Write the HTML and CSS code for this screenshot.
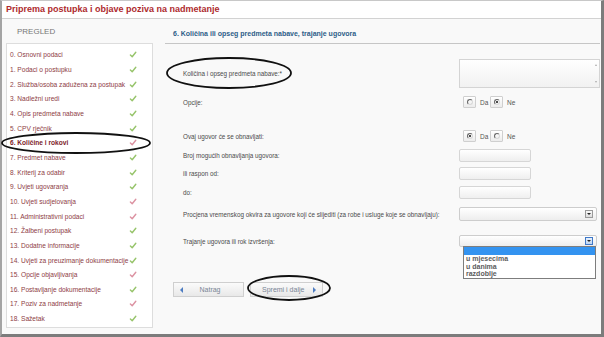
FILE: index.html
```html
<html lang="hr">
    <head>
        <meta charset="UTF-8">
        <meta name="viewport" content="width=device-width, initial-scale=1.0">
        <title>Priprema postupka</title>
        <link rel="stylesheet" href="styles.css">
    </head>
    <body>
        <svg class="defs" width="0" height="0">
            <symbol id="chk" viewBox="0 0 8 7">
                <path d="M1.4 4 L3.2 5.8 L6.8 1.2" fill="none" stroke="currentColor" stroke-width="1.4" stroke-linecap="round" stroke-linejoin="round"/>
            </symbol>
        </svg>
        <div class="frame">
            <div class="title">Priprema postupka i objave poziva na nadmetanje</div>
            <div class="layout">
                <aside class="sidebar">
                    <div class="side-head">PREGLED</div>
                    <ul class="steps">
                        <li><span>0. Osnovni podaci</span><svg class="check ok"><use href="#chk"/></svg></li>
                        <li><span>1. Podaci o postupku</span><svg class="check ok"><use href="#chk"/></svg></li>
                        <li><span>2. Služba/osoba zadužena za postupak</span><svg class="check ok"><use href="#chk"/></svg></li>
                        <li><span>3. Nadležni uredi</span><svg class="check ok"><use href="#chk"/></svg></li>
                        <li><span>4. Opis predmeta nabave</span><svg class="check ok"><use href="#chk"/></svg></li>
                        <li><span>5. CPV rječnik</span><svg class="check ok"><use href="#chk"/></svg></li>
                        <li class="current"><span>6. Količine i rokovi</span><svg class="check warn"><use href="#chk"/></svg></li>
                        <li><span>7. Predmet nabave</span><svg class="check ok"><use href="#chk"/></svg></li>
                        <li><span>8. Kriterij za odabir</span><svg class="check ok"><use href="#chk"/></svg></li>
                        <li><span>9. Uvjeti ugovaranja</span><svg class="check ok"><use href="#chk"/></svg></li>
                        <li><span>10. Uvjeti sudjelovanja</span><svg class="check warn"><use href="#chk"/></svg></li>
                        <li><span>11. Administrativni podaci</span><svg class="check warn"><use href="#chk"/></svg></li>
                        <li><span>12. Žalbeni postupak</span><svg class="check ok"><use href="#chk"/></svg></li>
                        <li><span>13. Dodatne informacije</span><svg class="check ok"><use href="#chk"/></svg></li>
                        <li><span>14. Uvjeti za preuzimanje dokumentacije</span><svg class="check ok"><use href="#chk"/></svg></li>
                        <li><span>15. Opcije objavljivanja</span><svg class="check warn"><use href="#chk"/></svg></li>
                        <li><span>16. Postavljanje dokumentacije</span><svg class="check ok"><use href="#chk"/></svg></li>
                        <li><span>17. Poziv za nadmetanje</span><svg class="check warn"><use href="#chk"/></svg></li>
                        <li><span>18. Sažetak</span><svg class="check ok"><use href="#chk"/></svg></li>
                    </ul>
                </aside>

                <section class="panel">
                    <h2 class="panel-title">6. Količina ili opseg predmeta nabave, trajanje ugovora</h2>

                    <div class="row r1">
                        <label>Količina i opseg predmeta nabave:*</label>
                        <div class="textarea"><span class="sc up"></span><span class="sc down"></span></div>
                    </div>
                    <div class="row r2">
                        <label>Opcije:</label>
                        <div class="radios">
                            <span class="rbox"><span class="rdot"></span></span><span class="rlabel">Da</span>
                            <span class="rbox"><span class="rdot on"></span></span><span class="rlabel">Ne</span>
                        </div>
                    </div>
                    <div class="row r3">
                        <label>Ovaj ugovor će se obnavljati:</label>
                        <div class="radios">
                            <span class="rbox"><span class="rdot on"></span></span><span class="rlabel">Da</span>
                            <span class="rbox"><span class="rdot"></span></span><span class="rlabel">Ne</span>
                        </div>
                    </div>
                    <div class="row r4">
                        <label>Broj mogućih obnavljanja ugovora:</label>
                        <div class="input"></div>
                    </div>
                    <div class="row r5">
                        <label>ili raspon od:</label>
                        <div class="input"></div>
                    </div>
                    <div class="row r6">
                        <label>do:</label>
                        <div class="input"></div>
                    </div>
                    <div class="row r7">
                        <label>Procjena vremenskog okvira za ugovore koji će slijediti (za robe i usluge koje se obnavljaju):</label>
                        <div class="select"><span class="arrow"></span></div>
                    </div>
                    <div class="row r8">
                        <label>Trajanje ugovora ili rok izvršenja:</label>
                        <div class="select open">
                            <span class="arrow"></span>
                            <ul class="options">
                                <li class="selected"></li>
                                <li>u mjesecima</li>
                                <li>u danima</li>
                                <li>razdoblje</li>
                            </ul>
                        </div>
                    </div>

                    <div class="actions">
                        <button type="button" class="btn back"><span class="tri left"></span><span class="btn-text">Natrag</span></button>
                        <button type="button" class="btn next"><span class="btn-text">Spremi i dalje</span><span class="tri right"></span></button>
                    </div>
                </section>
            </div>

            <svg class="marks" viewBox="0 0 604 337">
                <ellipse cx="229" cy="73" rx="62" ry="15"/>
                <ellipse cx="76" cy="143" rx="74" ry="10"/>
                <ellipse cx="289" cy="288" rx="41" ry="12"/>
            </svg>
        </div>
    </body>
</html>
```

FILE: styles.css
```css
* {
    margin: 0;
    padding: 0;
    box-sizing: border-box;
}

body {
    width: 604px;
    height: 337px;
    overflow: hidden;
    background-color: #fff;
    font-family: "Liberation Sans", Arial, sans-serif;
}

.defs {
    position: absolute;
}

.frame {
    position: relative;
    width: 604px;
    height: 337px;
    background-color: #f9f9f9;
    border-left: 2px solid #a4a4a4;
    border-top: 1px solid #c8c8c8;
    border-right: 3px solid #7c7c7c;
    border-bottom: 3px solid #7c7c7c;
}

.title {
    height: 18px;
    padding-left: 4px;
    line-height: 17px;
    font-size: 9px;
    font-weight: bold;
    color: #ae2a2e;
    background-color: #fff;
    border-bottom: 1px solid #d2d2d2;
}

.layout {
    display: flex;
}

/* sidebar */
.sidebar {
    width: 147px;
    margin-left: 4px;
}

.side-head {
    height: 24px;
    line-height: 25px;
    padding-left: 11px;
    font-size: 8px;
    color: #777;
}

.steps {
    list-style: none;
    height: 285px;
    padding-top: 3.5px;
    background-color: #fff;
    border: 1px solid #ddd;

    li {
        height: 14.67px;
        display: flex;
        align-items: center;
        justify-content: space-between;
        padding: 0 15px 0 3px;
        font-size: 6.6px;
        color: #8e3d45;
        white-space: nowrap;
    }

    li.current {
        font-weight: bold;
        color: #7d2229;
    }
}

.check {
    width: 8px;
    height: 7px;
    flex-shrink: 0;
}

.check.ok {
    color: #97c46b;
}

.check.warn {
    color: #dc93a2;
}

/* main panel */
.panel {
    flex: 1;
    margin-left: 12px;
    margin-right: 1px;
}

.panel-title {
    height: 25px;
    padding: 9px 0 0 8px;
    line-height: 12px;
    font-size: 7px;
    font-weight: bold;
    color: #2e5d88;
    border-bottom: 1px solid #c6c6c6;
}

.row {
    display: flex;
    align-items: center;
    padding-left: 18px;

    label {
        width: 276px;
        flex-shrink: 0;
        font-size: 6.3px;
        color: #4a4a4a;
        white-space: nowrap;
    }
}

.r1 { margin-top: 15px; height: 29px; }
.r2 { margin-top: 8px; height: 12px; }
.r3 { margin-top: 22px; height: 12px; }
.r4 { margin-top: 7px; height: 13px; }
.r5 { margin-top: 5px; height: 13px; }
.r6 { margin-top: 6px; height: 13px; }
.r7 { margin-top: 8px; height: 14px; }
.r8 { margin-top: 14px; height: 12px; }

.textarea {
    position: relative;
    width: 141px;
    height: 29px;
    border: 1px solid #d4d4d4;
    background: linear-gradient(#fff, #f1f1f1);
}

.sc {
    position: absolute;
    right: 2px;
    border-left: 1.5px solid transparent;
    border-right: 1.5px solid transparent;
}

.sc.up {
    top: 4px;
    border-bottom: 2px solid #aaa;
}

.sc.down {
    bottom: 4px;
    border-top: 2px solid #aaa;
}

.radios {
    display: flex;
    align-items: center;
    padding-left: 4px;
}

.rbox {
    width: 13px;
    height: 12px;
    display: flex;
    align-items: center;
    justify-content: center;
    border: 1px solid #cfcfcf;
    border-radius: 1px;
    background: linear-gradient(#fff, #ececec);
}

.rdot {
    width: 6px;
    height: 6px;
    border-radius: 50%;
    border: 1px solid;
    border-color: #666 #d8d8d8 #d8d8d8 #666;
    display: flex;
    align-items: center;
    justify-content: center;
}

.rdot.on::after {
    content: "";
    width: 2px;
    height: 2px;
    border-radius: 50%;
    background-color: #111;
}

.rlabel {
    width: 14px;
    padding-left: 4px;
    font-size: 6.5px;
    color: #555;
}

.input {
    width: 72px;
    height: 13px;
    border: 1px solid #d6d6d6;
    border-radius: 2px;
    background: linear-gradient(#fff, #efefef);
}

.select {
    position: relative;
    width: 138px;
    height: 100%;
    display: flex;
    align-items: center;
    justify-content: flex-end;
    padding-right: 3px;
    border: 1px solid #cdcdcd;
    border-radius: 2px;
    background: linear-gradient(#fff, #ededed);
}

.arrow {
    width: 8px;
    height: 8px;
    display: flex;
    align-items: center;
    justify-content: center;
    border: 1px solid #9a9a9a;
    background: linear-gradient(#fafafa, #dcdcdc);
}

.arrow::after {
    content: "";
    border-left: 2px solid transparent;
    border-right: 2px solid transparent;
    border-top: 2.5px solid #222;
}

.select.open .arrow {
    border-color: #3f78c8;
    background: linear-gradient(#e8f1fc, #bcd4f2);
}

.options {
    position: absolute;
    top: 100%;
    left: 3px;
    width: 133px;
    height: 33px;
    list-style: none;
    background-color: #fff;
    border: 1px solid #7d7d7d;

    li {
        height: 7.7px;
        line-height: 7.7px;
        padding-left: 2px;
        font-size: 7px;
        font-weight: bold;
        color: #5c5c5c;
    }

    li.selected {
        height: 8px;
        background-color: #3393f0;
    }
}

.actions {
    display: flex;
    gap: 6px;
    margin-top: 35px;
    padding-left: 8px;
}

.btn {
    width: 71px;
    height: 15px;
    display: flex;
    align-items: center;
    padding: 0 6px;
    border: 1px solid #cfcfcf;
    background: linear-gradient(#fbfbfb, #e8e8e8);
    font-family: "Liberation Sans", Arial, sans-serif;
    font-size: 7px;
    color: #7a8596;
    cursor: pointer;
}

.btn.next {
    width: 73px;
    padding-left: 11px;
}

.btn-text {
    flex: 1;
    text-align: center;
}

.btn.next .btn-text {
    text-align: left;
}

.tri {
    border-top: 3px solid transparent;
    border-bottom: 3px solid transparent;
}

.tri.left {
    border-right: 3.5px solid #4d7cc2;
}

.tri.right {
    border-left: 3.5px solid #4d7cc2;
}

/* hand-drawn annotation marks */
.marks {
    position: absolute;
    top: -1px;
    left: -2px;
    width: 604px;
    height: 337px;
    pointer-events: none;

    ellipse {
        fill: none;
        stroke: #111;
        stroke-width: 1.8;
    }
}
```
